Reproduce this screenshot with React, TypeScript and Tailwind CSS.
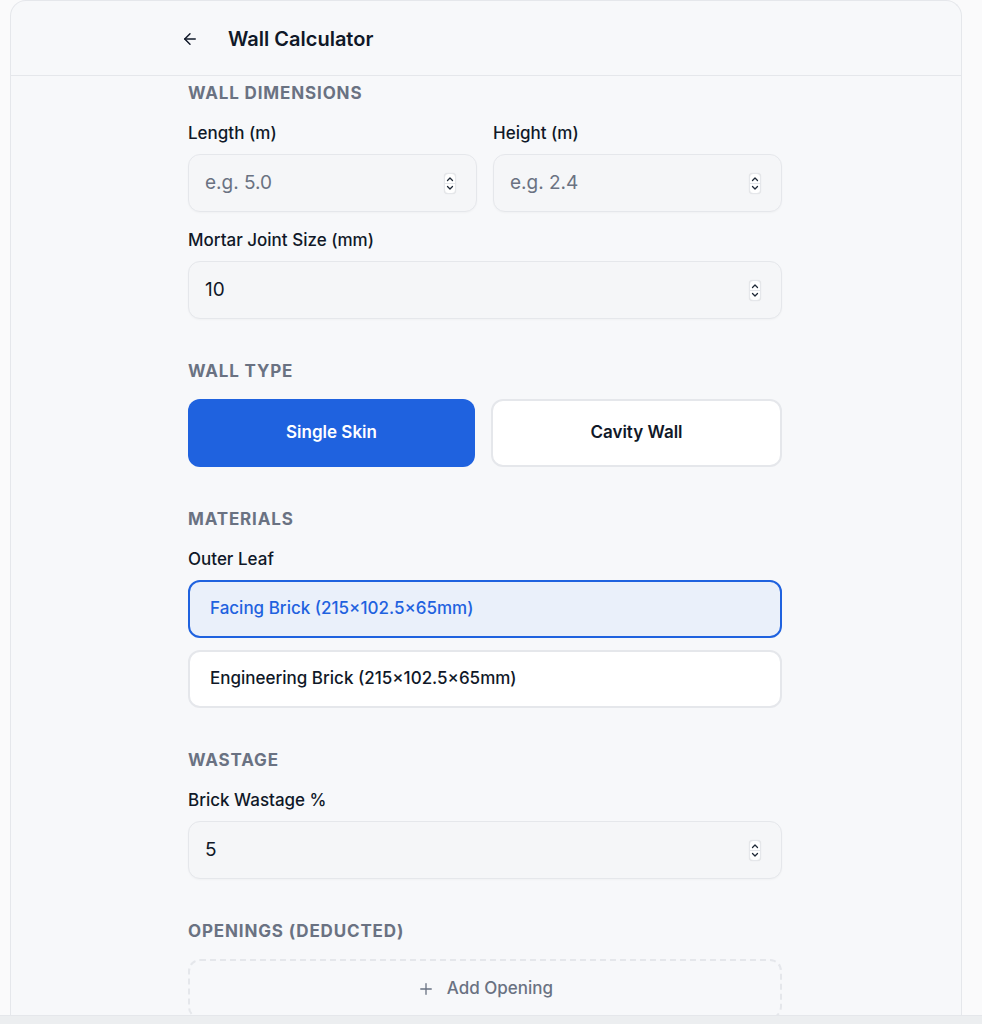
import { ArrowLeft, Plus } from "lucide-react";
import type { FC, ReactNode } from "react";

const Spinner: FC = () => (
  <div className="flex h-[21px] w-[12px] shrink-0 flex-col items-center justify-between rounded-[4px] border border-gray-200 bg-white shadow-[0_0_1px_rgba(0,0,0,0.15)]">
    <svg width="8" height="8" viewBox="0 0 8 8" className="mt-[1px]">
      <path d="M1.5 5.5 L4 3 L6.5 5.5" fill="none" stroke="#1f2937" strokeWidth="1.3" strokeLinecap="round" strokeLinejoin="round" />
    </svg>
    <div className="h-px w-full bg-gray-200" />
    <svg width="8" height="8" viewBox="0 0 8 8" className="mb-[1px]">
      <path d="M1.5 2.5 L4 5 L6.5 2.5" fill="none" stroke="#1f2937" strokeWidth="1.3" strokeLinecap="round" strokeLinejoin="round" />
    </svg>
  </div>
);

const NumberField: FC<{ label: string; placeholder?: string; value?: string }> = ({
  label,
  placeholder,
  value,
}) => (
  <div className="flex min-w-0 flex-1 flex-col">
    <label className="mb-[9px] text-[17px] leading-6 font-medium text-gray-900">{label}</label>
    <div className="flex h-[58px] items-center rounded-xl border border-gray-200 bg-[#f5f6f8] pr-[20px] pl-4 shadow-[0_1px_2px_rgba(0,0,0,0.03)]">
      <input
        type="text"
        defaultValue={value}
        placeholder={placeholder}
        className="w-full min-w-0 flex-1 bg-transparent text-[19px] text-gray-900 outline-none placeholder:text-gray-500"
      />
      <Spinner />
    </div>
  </div>
);

const Section: FC<{ title: string; children: ReactNode }> = ({ title, children }) => (
  <section className="flex flex-col">
    <h2 className="mb-4 text-[17px] leading-6 font-bold tracking-wider text-gray-500 uppercase">
      {title}
    </h2>
    {children}
  </section>
);

export default function App() {
  return (
    <div className="flex h-screen flex-col overflow-hidden bg-[#fafafb] font-['Inter',sans-serif]">
      <div className="ml-[10px] flex w-[952px] flex-1 flex-col overflow-hidden rounded-t-2xl border border-b-0 border-gray-200 bg-[#f7f8fa]">
        {/* Header */}
        <header className="flex h-[75px] shrink-0 border-b border-gray-200">
          <div className="ml-[168px] flex w-[610px] items-center gap-[27px] pt-[1px]">
            <button type="button" className="p-[2px] text-gray-900">
              <ArrowLeft size={18} strokeWidth={1.9} />
            </button>
            <h1 className="text-xl font-semibold text-gray-900">Wall Calculator</h1>
          </div>
        </header>

        {/* Form */}
        <div className="ml-[177px] flex w-[594px] flex-col gap-10 pt-[5px]">
          <Section title="Wall Dimensions">
            <div className="flex flex-col gap-4">
              <div className="flex gap-4">
                <NumberField label="Length (m)" placeholder="e.g. 5.0" />
                <NumberField label="Height (m)" placeholder="e.g. 2.4" />
              </div>
              <NumberField label="Mortar Joint Size (mm)" value="10" />
            </div>
          </Section>

          <Section title="Wall Type">
            <div className="flex gap-4">
              <button
                type="button"
                className="h-[68px] flex-1 rounded-xl bg-[#1f62df] text-[17px] font-semibold text-white"
              >
                Single Skin
              </button>
              <button
                type="button"
                className="h-[68px] flex-1 rounded-xl border-2 border-gray-200 bg-white text-[17px] font-semibold text-gray-900"
              >
                Cavity Wall
              </button>
            </div>
          </Section>

          <Section title="Materials">
            <div className="flex flex-col">
              <div className="mb-[9px] text-[17px] leading-6 font-medium text-gray-900">Outer Leaf</div>
              <div className="flex flex-col gap-3">
                <button
                  type="button"
                  className="flex h-[58px] items-center rounded-xl border-2 border-[#1f62df] bg-[#eaf0fa] px-5 text-[17px] font-medium text-[#1f62df]"
                >
                  Facing Brick (215×102.5×65mm)
                </button>
                <button
                  type="button"
                  className="flex h-[58px] items-center rounded-xl border-2 border-gray-200 bg-white px-5 text-[17px] font-medium text-gray-900"
                >
                  Engineering Brick (215×102.5×65mm)
                </button>
              </div>
            </div>
          </Section>

          <Section title="Wastage">
            <NumberField label="Brick Wastage %" value="5" />
          </Section>

          <Section title="Openings (Deducted)">
            <button
              type="button"
              className="flex h-[60px] items-center justify-center gap-[12px] rounded-xl border-2 border-dashed border-gray-200 text-[17px] font-medium text-gray-500"
            >
              <Plus size={18} strokeWidth={1.75} />
              Add Opening
            </button>
          </Section>
        </div>
      </div>
      <div className="h-[9px] shrink-0 border-t border-gray-200 bg-[#eceef0]" />
    </div>
  );
}
